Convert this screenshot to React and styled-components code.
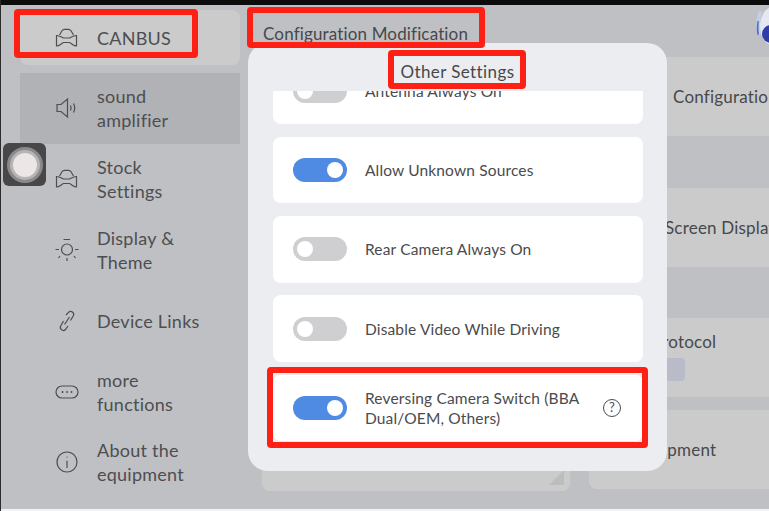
import React from 'react';
import styled, { createGlobalStyle } from 'styled-components';

const Global = createGlobalStyle`
  html, body { margin: 0; padding: 0; background: #fff; }
  * { box-sizing: border-box; }
`;

const sideItems = [
  { icon: 'speaker', label: 'sound amplifier', active: true },
  { icon: 'car', label: 'Stock Settings' },
  { icon: 'sun', label: 'Display & Theme' },
  { icon: 'link', label: 'Device Links' },
  { icon: 'more', label: 'more functions' },
  { icon: 'info', label: 'About the equipment' },
];

const settings = [
  { label: 'Allow Unknown Sources', on: true },
  { label: 'Rear Camera Always On' },
  { label: 'Disable Video While Driving' },
  { label: 'Reversing Camera Switch (BBA Dual/OEM, Others)', on: true, help: true },
];

function Icon({ name }) {
  const paths = {
    car: (
      <>
        <path d="M4.500 9 7 4.800C7.600 3.800 8.200 3.300 9.500 3.300h4c1.300 0 1.900.5 2.500 1.500L18.500 9" />
        <path d="M1.500 9.500c3.500 0 5.500 2 7 2.500h6c1.500-.5 3.500-2.500 7-2.500v10.500c-3 0-5-2.800-7-3.500h-6c-2 .7-4 3.500-7 3.500z" />
      </>
    ),
    speaker: (
      <>
        <path d="M2 8.500h4L12.500 3v18L6 15.500H2z" />
        <path d="M15.500 9.500c.8 1.600.8 3.400 0 5" />
        <path d="M18.500 7.500c1.500 2.800 1.500 6.200 0 9" />
      </>
    ),
    sun: (
      <>
        <circle cx="12" cy="11.500" r="5.500" />
        <path d="M8.500 1.500h6.500M.5 11.500h3.500M20 11.500h3.500M5 18l-1.500 2M19 18l1.500 2M12 20v3" />
      </>
    ),
    link: (
      <>
        <path d="M11 6 13.500 3.300a3 3 0 0 1 4.800 3.500L15.500 11.500" />
        <path d="M13 17 10.500 20.500a3 3 0 0 1-4.800-3.500L8.500 12" />
        <path d="M14.500 8 9.500 15.500" />
      </>
    ),
    more: (
      <>
        <rect x="1" y="6" width="22" height="12" rx="6" />
        <path d="M7.500 12h.1M12 12h.1M16.500 12h.1" strokeWidth="1.800" strokeLinecap="round" />
      </>
    ),
    info: (
      <>
        <circle cx="12" cy="12" r="10" />
        <path d="M12 11v6.500M12 7v.1" strokeLinecap="round" />
      </>
    ),
  };
  return (
    <SideIcon viewBox="0 0 24 24" fill="none" stroke="currentColor" strokeWidth="1.200">
      {paths[name]}
    </SideIcon>
  );
}

function Switch({ on }) {
  return (
    <Track $on={on}>
      <Knob />
    </Track>
  );
}

export default function App() {
  return (
    <Screen>
      <Global />
      <TopBar />
      <Body>
        <Sidebar>
          <CanbusItem>
            <Icon name="car" />
            <SideLabel>CANBUS</SideLabel>
          </CanbusItem>
          {sideItems.map(item => (
            <SideItem key={item.label} $active={item.active}>
              <Icon name={item.icon} />
              <SideLabel>{item.label}</SideLabel>
            </SideItem>
          ))}
        </Sidebar>

        <Main>
          <PageTitle>Configuration Modification</PageTitle>
          <Columns>
            <LeftColumn>
              <LeftCard>
                <Grip />
              </LeftCard>
            </LeftColumn>
            <RightColumn>
              <InfoCard $top={0} $left={84}>Configuration</InfoCard>
              <InfoCard $top={52} $left={76}>Screen Display</InfoCard>
              <InfoCard $top={51} $left={63} $high>
                <span>Protocol</span>
                <Tag />
              </InfoCard>
              <InfoCard $top={13} $left={45}>Equipment</InfoCard>
            </RightColumn>
          </Columns>
        </Main>
      </Body>
      <BottomLine />

      <Logo viewBox="0 0 24 46">
        <ellipse cx="30" cy="22" rx="15" ry="20" fill="#e4e7f1" />
        <path d="M14 7C11 13 10.500 24 12.500 31L15.500 30C14.500 23 15 14 17 8z" fill="#c3cfe6" />
        <path d="M12.500 17C11.500 22 11.500 27 12.500 31L14 30.500C13.300 27 13.300 22 13.800 17z" fill="#3d6fd0" />
        <circle cx="26" cy="30" r="9" fill="#2f3da8" />
      </Logo>

      <FloatButton>
        <FloatRing>
          <FloatCore />
        </FloatRing>
      </FloatButton>

      <Modal>
        <ModalTitle>Other Settings</ModalTitle>
        <ScrollArea>
          <SettingsList>
            <SettingCard>
              <Switch />
              <SettingLabel>Antenna Always On</SettingLabel>
            </SettingCard>
            {settings.map(s => (
              <SettingCard key={s.label}>
                <Switch on={s.on} />
                <SettingLabel>{s.label}</SettingLabel>
                {s.help && <HelpIcon>?</HelpIcon>}
              </SettingCard>
            ))}
          </SettingsList>
        </ScrollArea>
      </Modal>

      <Marker $x={14} $y={9} $w={184} $h={49} />
      <Marker $x={247} $y={7} $w={238} $h={41} />
      <Marker $x={388} $y={50} $w={138} $h={39} />
      <Marker $x={267} $y={367} $w={381} $h={81} />
    </Screen>
  );
}

const Screen = styled.div`
  position: relative;
  width: 769px;
  height: 511px;
  overflow: hidden;
  display: flex;
  flex-direction: column;
  background: #bfc0c3;
  border-left: 1px solid #2b2b2c;
  font-family: Lato, "Noto Sans", "Liberation Sans", sans-serif;
  color: #4a4b4e;
`;

const TopBar = styled.div`
  height: 5px;
  background: #0c0c0c;
  flex: none;
`;

const Body = styled.div`
  flex: 1;
  display: flex;
  min-height: 0;
`;

const BottomLine = styled.div`
  height: 2px;
  background: #f2f2f3;
  flex: none;
`;

const Sidebar = styled.nav`
  width: 247px;
  flex: none;
  padding: 5px 8px 0 19px;
`;

const CanbusItem = styled.div`
  height: 55px;
  margin-bottom: 8px;
  display: flex;
  align-items: center;
  padding-left: 35px;
  background: #cbcbcb;
  border-radius: 8px;
`;

const SideItem = styled.div`
  height: 70.800px;
  display: flex;
  align-items: center;
  padding-left: 35px;
  background: ${p => (p.$active ? '#b1b2b5' : 'transparent')};
`;

const SideIcon = styled.svg`
  width: 24px;
  height: 24px;
  flex: none;
  color: #4d4e51;
`;

const SideLabel = styled.span`
  margin-left: 18px;
  width: 112px;
  font-size: 18px;
  line-height: 24px;
  letter-spacing: 0.25px;
  color: #4d4e51;
`;

const Main = styled.main`
  flex: 1;
  min-width: 0;
  padding-left: 14px;
`;

const PageTitle = styled.h1`
  margin: 0;
  height: 52px;
  padding: 19px 0 0 1px;
  font-size: 17px;
  line-height: 20px;
  letter-spacing: 0.15px;
  font-weight: 400;
  color: #47484b;
  white-space: nowrap;
`;

const Columns = styled.div`
  display: flex;
  gap: 19px;
`;

const LeftColumn = styled.div`
  width: 308px;
  flex: none;
`;

const LeftCard = styled.div`
  position: relative;
  height: 434px;
  background: #cbcbcb;
  border-radius: 8px;
`;

const Grip = styled.div`
  position: absolute;
  right: 6px;
  bottom: 6px;
  width: 15px;
  height: 15px;
  background: #bdbdbe;
  clip-path: polygon(100% 0, 100% 100%, 0 100%);
`;

const RightColumn = styled.div`
  width: 240px;
  flex: none;
  display: flex;
  flex-direction: column;
`;

const InfoCard = styled.div`
  position: relative;
  height: 79px;
  margin-top: ${p => p.$top}px;
  padding-left: ${p => p.$left}px;
  display: flex;
  flex-direction: column;
  justify-content: ${p => (p.$high ? 'flex-start' : 'center')};
  padding-top: ${p => (p.$high ? '14px' : '0')};
  background: #cbcbcb;
  border-radius: 8px;
  font-size: 17px;
  line-height: 20px;
  letter-spacing: 0.2px;
  white-space: nowrap;
  color: #47484b;
`;

const Tag = styled.div`
  position: absolute;
  left: 60px;
  top: 40px;
  width: 36px;
  height: 23px;
  background: #b9bcc8;
  border-radius: 4px;
`;

const Logo = styled.svg`
  position: absolute;
  top: 4px;
  right: 0;
  width: 24px;
  height: 46px;
`;

const FloatButton = styled.div`
  position: absolute;
  left: 2px;
  top: 143px;
  width: 43px;
  height: 43px;
  display: flex;
  align-items: center;
  justify-content: center;
  background: #474648;
  border-radius: 6px;
`;

const FloatRing = styled.div`
  width: 36px;
  height: 36px;
  display: flex;
  align-items: center;
  justify-content: center;
  background: #8b898a;
  border-radius: 50%;
`;

const FloatCore = styled.div`
  width: 24px;
  height: 24px;
  background: #ece6e6;
  border-radius: 50%;
  box-shadow: 0 0 0 3px #b7b4b4;
`;

const Modal = styled.section`
  position: absolute;
  left: 247px;
  top: 43px;
  width: 419px;
  height: 428px;
  display: flex;
  flex-direction: column;
  background: #ecedf1;
  border-radius: 20px;
`;

const ModalTitle = styled.h2`
  margin: 0;
  height: 48px;
  padding-top: 19px;
  text-align: center;
  font-size: 17px;
  line-height: 20px;
  letter-spacing: 0.4px;
  font-weight: 400;
  color: #47484b;
`;

const ScrollArea = styled.div`
  flex: 1;
  min-height: 0;
  overflow: hidden;
  padding: 0 24px 0 25px;
`;

const SettingsList = styled.div`
  display: flex;
  flex-direction: column;
  gap: 12.600px;
  margin-top: -33.600px;
`;

const SettingCard = styled.div`
  height: 66.700px;
  flex: none;
  display: flex;
  align-items: center;
  padding: 0 22px 0 20px;
  background: #fff;
  border-radius: 8px;
`;

const Track = styled.div`
  width: 54px;
  height: 24px;
  flex: none;
  display: flex;
  align-items: center;
  justify-content: ${p => (p.$on ? 'flex-end' : 'flex-start')};
  padding: 0 4px;
  background: ${p => (p.$on ? '#4f8ae3' : '#cfcfd1')};
  border-radius: 12px;
`;

const Knob = styled.div`
  width: 16px;
  height: 16px;
  background: #fff;
  border-radius: 50%;
`;

const SettingLabel = styled.span`
  flex: 1;
  margin-left: 18px;
  font-size: 15.500px;
  line-height: 20px;
  letter-spacing: 0.15px;
  color: #4a4b4e;
`;

const HelpIcon = styled.span`
  width: 18px;
  height: 18px;
  flex: none;
  margin-left: 13px;
  display: flex;
  align-items: center;
  justify-content: center;
  border: 1.200px solid #4a4b4e;
  border-radius: 50%;
  font-size: 13px;
  line-height: 1;
`;

const Marker = styled.div`
  position: absolute;
  left: ${p => p.$x - 1}px;
  top: ${p => p.$y}px;
  width: ${p => p.$w}px;
  height: ${p => p.$h}px;
  border: 6px solid #fe2015;
  border-radius: 4px;
  pointer-events: none;
`;
